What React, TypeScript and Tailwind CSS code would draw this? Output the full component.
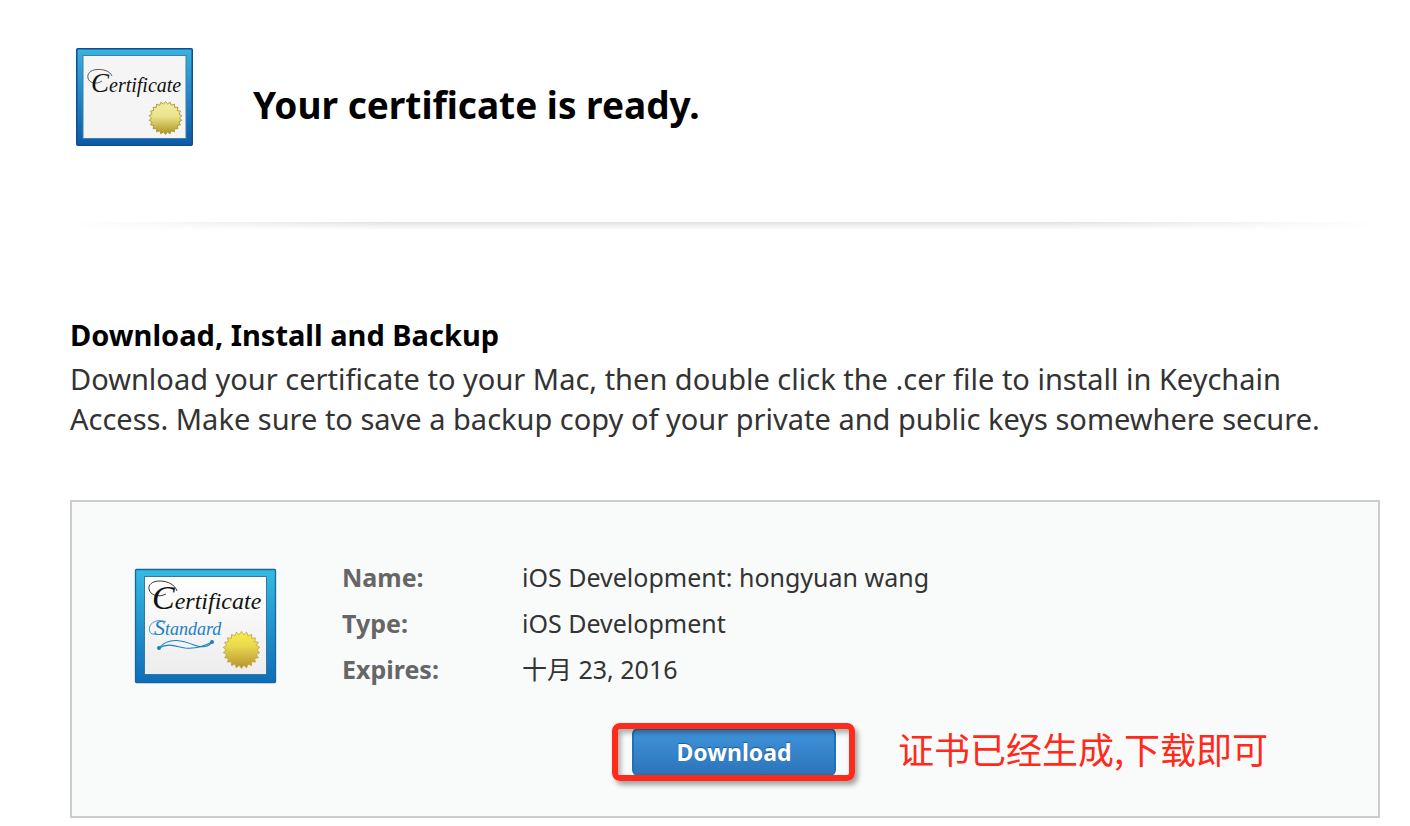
import React from "react";

function sealPoints(cx: number, cy: number, outer: number, inner: number, teeth: number): string {
  const points: string[] = [];
  for (let i = 0; i < teeth * 2; i++) {
    const radius = i % 2 === 0 ? outer : inner;
    const angle = (Math.PI * i) / teeth - Math.PI / 2;
    points.push(`${(cx + radius * Math.cos(angle)).toFixed(2)},${(cy + radius * Math.sin(angle)).toFixed(2)}`);
  }
  return points.join(" ");
}

function CertificateIcon() {
  return (
    <svg className="h-[98px] w-[117px] shrink-0" viewBox="0 0 117 98" role="img" aria-label="Certificate">
      <defs>
        <linearGradient id="ready-frame" x1="0" y1="0" x2="0" y2="1">
          <stop offset="0" stopColor="#3ab2df" />
          <stop offset="1" stopColor="#0d5aa8" />
        </linearGradient>
        <linearGradient id="ready-seal" x1="0" y1="0" x2="0" y2="1">
          <stop offset="0" stopColor="#f3eda0" />
          <stop offset="0.45" stopColor="#ece38c" />
          <stop offset="1" stopColor="#a8921c" />
        </linearGradient>
      </defs>
      <rect x="0.75" y="0.75" width="115.5" height="96.5" rx="1" fill="url(#ready-frame)" stroke="#0e4f8f" strokeWidth="1.5" />
      <rect x="7" y="7.5" width="103" height="83" fill="#f5f5f5" stroke="#3a7fae" strokeWidth="1" />
      <path
        d="M36 28C34 23 27 21 21 21.5C14 22 11 26 12 30C13 35 20 37 26 33"
        fill="none"
        stroke="#333"
        strokeWidth="0.8"
      />
      <text x="15" y="44" fill="#111" fontSize="20" fontStyle="italic" fontFamily="'Liberation Serif', serif">
        <tspan fontSize="27">C</tspan>ertificate
      </text>
      <polygon points={sealPoints(89.5, 70, 16.5, 14, 22)} fill="url(#ready-seal)" stroke="#a8982f" strokeWidth="0.9" />
    </svg>
  );
}

function StandardCertificateIcon() {
  return (
    <svg className="h-[116px] w-[143px] shrink-0" viewBox="0 0 143 116" role="img" aria-label="Certificate Standard">
      <defs>
        <linearGradient id="standard-frame" x1="0" y1="0" x2="0" y2="1">
          <stop offset="0" stopColor="#35bbe2" />
          <stop offset="1" stopColor="#0f6db8" />
        </linearGradient>
        <linearGradient id="standard-paper" x1="0" y1="0" x2="0" y2="1">
          <stop offset="0" stopColor="#ffffff" />
          <stop offset="1" stopColor="#ededed" />
        </linearGradient>
        <linearGradient id="standard-seal" x1="0" y1="0" x2="0" y2="1">
          <stop offset="0" stopColor="#f8ee4c" />
          <stop offset="0.4" stopColor="#e9d84d" />
          <stop offset="1" stopColor="#b5912f" />
        </linearGradient>
      </defs>
      <rect x="1.5" y="1.5" width="140" height="113" rx="1" fill="url(#standard-frame)" stroke="#1a64a3" strokeWidth="1.3" />
      <rect x="10.5" y="8.5" width="122" height="98" fill="url(#standard-paper)" stroke="#35789d" strokeWidth="1" />
      <path
        d="M43 23C41 17 34 13 26 13C18 13 14 17 15 21C16 27 24 30 32 26"
        fill="none"
        stroke="#222"
        strokeWidth="0.9"
      />
      <text x="18" y="41" fill="#111" fontSize="24" fontStyle="italic" fontFamily="'Liberation Serif', serif">
        <tspan fontSize="34">C</tspan>ertificate
      </text>
      <path d="M32 54C26 51 18 53 16 58C14 63 17 67 21 66" fill="none" stroke="#1c7fc4" strokeWidth="0.8" />
      <text x="20" y="67" fill="#1c7fc4" fontSize="18" fontStyle="italic" fontFamily="'Liberation Serif', serif">
        <tspan fontSize="22">S</tspan>tandard
      </text>
      <g fill="none" stroke="#1c7fc4" strokeWidth="1.1">
        <path d="M25 80C35 68 50 73 60 77C68 80 75 79 78 74" />
        <path d="M25 80C35 74 43 79 51 80C62 81 71 78 78 74" />
      </g>
      <circle cx="25" cy="80" r="2" fill="#1c7fc4" />
      <circle cx="78" cy="74" r="2" fill="#1c7fc4" />
      <polygon points={sealPoints(107.5, 82, 18.5, 15.5, 22)} fill="url(#standard-seal)" stroke="#bfa23a" strokeWidth="0.8" />
    </svg>
  );
}

const details = [
  { label: "Name:", value: "iOS Development: hongyuan wang" },
  { label: "Type:", value: "iOS Development" },
  { label: "Expires:", value: "十月 23, 2016" },
];

export default function App() {
  return (
    <main className="bg-white pt-12 pr-[30px] pb-2 pl-[70px] font-['Noto_Sans','Noto_Sans_CJK_SC',sans-serif] text-[#333]">
      <header className="flex items-center gap-[60px] pl-1.5">
        <CertificateIcon />
        <h1 className="pt-4 text-[37px] leading-[48px] font-bold text-black">Your certificate is ready.</h1>
      </header>

      <div className="mt-[76px] h-2 bg-[linear-gradient(to_right,white,transparent_25%,transparent_75%,white),linear-gradient(to_bottom,#e0e0e0,#eeeeee_40%,white)]" />

      <section className="mt-[85px]">
        <h2 className="text-[29px] leading-10 font-bold text-black">Download, Install and Backup</h2>
        <p className="mt-1 pr-10 text-[29px] leading-10">
          Download your certificate to your Mac, then double click the .cer file to install in Keychain Access. Make sure
          to save a backup copy of your private and public keys somewhere secure.
        </p>
      </section>

      <section className="mt-[61px] border-2 border-[#ccc] bg-[#f9fbfa] pt-[52px] pb-[35px] pl-[62px]">
        <div className="flex items-start">
          <div className="pt-3.5">
            <StandardCertificateIcon />
          </div>
          <dl className="grid grid-cols-[180px_auto] pl-[65px] text-[25px] leading-[46px]">
            {details.map((item) => (
              <React.Fragment key={item.label}>
                <dt className="font-bold text-[#666]">{item.label}</dt>
                <dd>{item.value}</dd>
              </React.Fragment>
            ))}
          </dl>
        </div>

        <div className="mt-[31px] flex items-start gap-[62px] pl-[498px]">
          <div className="relative py-[5px]">
            <button
              type="button"
              className="block h-12 w-[204px] rounded-md border-2 border-[#1a74b4] bg-linear-to-b from-[#3f94da] to-[#2d74bb] text-[23px] leading-none font-bold text-white [text-shadow:0_-1px_1px_#1d5c99]"
            >
              Download
            </button>
            <div className="pointer-events-none absolute inset-y-0 -right-[19px] -left-5 rounded-lg border-6 border-[#ff2a1a] shadow-[3px_4px_5px_rgba(0,0,0,0.35),inset_3px_4px_5px_rgba(0,0,0,0.3)]" />
          </div>
          <p className="font-['Noto_Sans_CJK_SC',sans-serif] text-[36px] leading-[50px] text-[#ff2a1a]">
            证书已经生成,下载即可
          </p>
        </div>
      </section>
    </main>
  );
}
